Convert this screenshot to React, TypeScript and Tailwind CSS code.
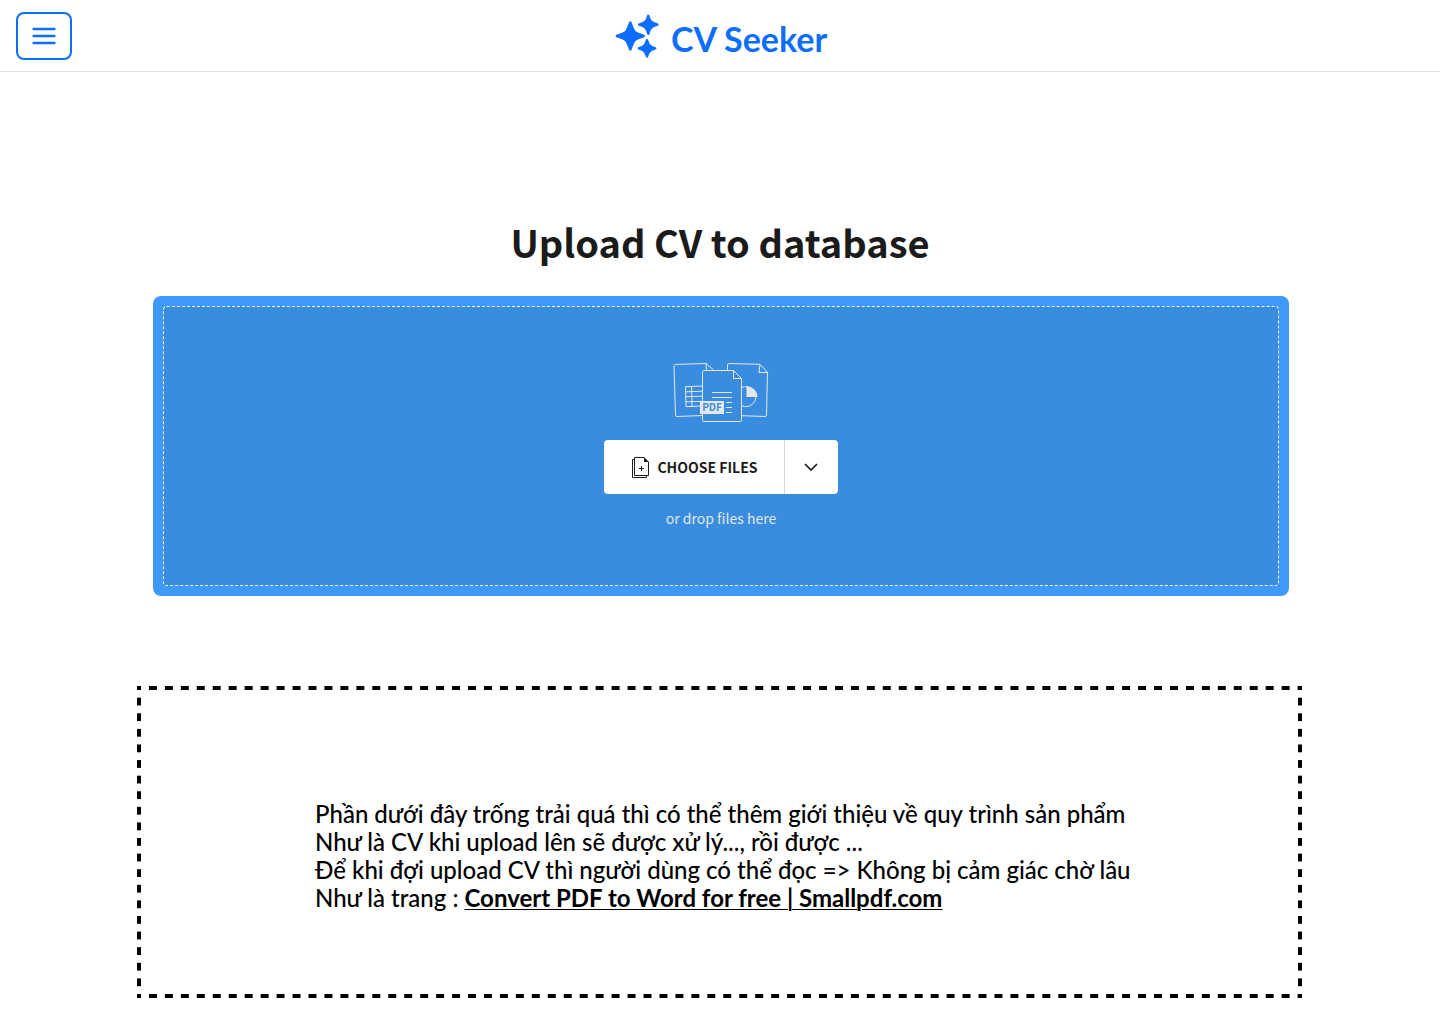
import React from "react";

function Sparkles() {
  return (
    <svg className="h-11 w-11" viewBox="0 0 44 44" fill="#0d6efd" stroke="#0d6efd" strokeWidth="2.4" strokeLinejoin="round" aria-hidden="true">
      <path d="M15.3 8.4C17.3 13.4 18.6 17.6 20.6 18.6C22.6 20 25 20.8 28.8 22C25 23.2 22.6 24 20.6 25.4C18.6 26.4 17.3 30.6 15.3 35.6C13.3 30.6 12 26.4 10 25.4C8 24 5.6 23.2 1.8 22C5.6 20.8 8 20 10 18.6C12 17.6 13.3 13.4 15.3 8.4Z" />
      <path d="M33.3 1.8C34.7 6.8 35.7 8.6 42.5 10.6C35.7 12.4 34.7 14.6 33.3 19.8C31.9 14.6 30.9 12.4 24.1 10.6C30.9 8.6 31.9 6.8 33.3 1.8Z" />
      <path d="M32 26.2C33.4 31 34.3 32.6 40.2 34.4C34.3 36.2 33.4 37.8 32 42.4C30.6 37.8 29.7 36.2 23.8 34.4C29.7 32.6 30.6 31 32 26.2Z" />
    </svg>
  );
}

function Documents() {
  return (
    <svg className="h-[60px] w-[96px]" viewBox="0 0 96 60" fill="none" stroke="#e5e8ea" strokeLinejoin="round" aria-hidden="true">
      <path d="M29.5 53.5L4 54.5Q2.6 54.5 2.5 53L1 4Q1 2.5 2.5 2.4L33 1.5L40.5 8" />
      <path d="M33 1.5L33.5 8" />
      <path d="M29.5 24L12.5 24.7L13 44.7L28 44M12.6 29.8L29.5 29.2M12.7 34.7L29.5 34.2M12.9 39.8L29.5 39.4M18.5 24.5L19 44.4" />
      <path d="M54.5 8V3Q54.5 1.5 56.5 1.5L87 2.3L94.5 10.3L93.5 53Q93.5 54.5 92 54.5L69 53.7" />
      <path d="M87 2.3L86 10.5H94.5" />
      <path d="M69 25.4A10 10 0 1 1 69 43.8" />
      <path d="M73.5 24.5V35H84.5A10.5 10.5 0 0 0 73.5 24.5Z" fill="#e5e8ea" stroke="none" />
      <path d="M60.5 8.5H30.5Q29.5 8.5 29.5 9.5V58.5Q29.5 59.5 30.5 59.5H67.5Q68.5 59.5 68.5 58.5V16.5L60.5 8.5V16.5H68.5" fill="#3a8dde" />
      <path d="M39 30.5H59M39 35.5H59M53 40.5H59M53 45.5H59M53 50.5H59" />
      <path d="M27 39H51V52H27Z" fill="#e5e8ea" stroke="none" />
      <text x="39" y="49" textAnchor="middle" fill="#3a8dde" stroke="none" fontSize="10" fontWeight="700" fontFamily="Noto Sans CJK JP">PDF</text>
    </svg>
  );
}

function FileAdd() {
  return (
    <svg className="h-[21px] w-[17px]" viewBox="0 0 17 21" fill="none" stroke="#1b1b1b" aria-hidden="true">
      <path d="M2.5 2.5H.5V20.5H14.5V18.5" />
      <path d="M12 .5H2.5V18.5H16.5V5" />
      <path d="M12 0L17 5H12Z" fill="#1b1b1b" stroke="none" />
      <path d="M9.5 9V14M7 11.5H12" />
    </svg>
  );
}

const dashes =
  "bg-[linear-gradient(to_right,#000_4px,transparent_4px,transparent_12px,#000_12px),linear-gradient(to_right,#000_4px,transparent_4px,transparent_12px,#000_12px),linear-gradient(to_bottom,#000_4px,transparent_4px,transparent_12px,#000_12px),linear-gradient(to_bottom,#000_4px,transparent_4px,transparent_12px,#000_12px)] [background-position:left_top,left_bottom,left_top,right_top] [background-repeat:round_no-repeat,round_no-repeat,no-repeat_round,no-repeat_round] [background-size:16px_4px,16px_4px,4px_16px,4px_16px]";

export default function App() {
  return (
    <div className="min-h-screen bg-white pb-[26px] text-black">
      <header className="grid h-[72px] grid-cols-[1fr_auto_1fr] items-center border-b border-[#dee2e6] px-4">
        <button type="button" aria-label="Open menu" className="flex h-12 w-14 items-center justify-center rounded-lg border-2 border-[#0d6efd]">
          <svg className="h-6 w-6" viewBox="0 0 24 24" stroke="#0d6efd" strokeWidth="2.3" strokeLinecap="round" aria-hidden="true">
            <path d="M1.5 5H22.5M1.5 12H22.5M1.5 19H22.5" />
          </svg>
        </button>
        <a href="#" className="flex items-center gap-3 pl-0.5 font-['Lato',sans-serif] text-[34px] leading-10 font-bold text-[#0d6efd]">
          <Sparkles />
          <span className="pt-1.5">CV Seeker</span>
        </a>
      </header>

      <main className="font-['Noto_Sans_CJK_JP',sans-serif]">
        <h1 className="mt-[142px] text-center text-[38px] leading-[56px] font-bold text-[#1b1b1b]">Upload CV to database</h1>

        <section aria-label="Upload" className="mt-[26px] mr-[151px] ml-[153px] rounded-lg bg-[#3f99f8] p-[10px]">
          <div className="flex flex-col items-center rounded border border-dashed border-white bg-[#3a8dde] pt-[55px] pb-14">
            <Documents />
            <div className="mt-[18px] flex h-[54px] overflow-hidden rounded bg-white text-[#1b1b1b]">
              <button type="button" className="flex w-[180px] items-center justify-center gap-2 pl-0.5 text-[14px] font-bold whitespace-nowrap">
                <FileAdd />
                CHOOSE FILES
              </button>
              <button type="button" aria-label="More sources" className="flex w-[54px] items-center justify-center border-l border-[#d6d6d6] pr-0.5">
                <svg className="h-4 w-4" viewBox="0 0 16 16" fill="none" stroke="#1b1b1b" strokeWidth="1.7" aria-hidden="true">
                  <path d="M2 5L8 11L14 5" />
                </svg>
              </button>
            </div>
            <p className="mt-[13px] text-[14px] leading-[22px] text-[#e0e5ea]">or drop files here</p>
          </div>
        </section>

        <section className={`mt-[90px] mr-[138px] ml-[137px] pr-[100px] pl-[178px] pt-[114px] pb-[86px] font-['Lato',sans-serif] text-[24px] leading-7 font-medium ${dashes}`}>
          <p>Phần dưới đây trống trải quá thì có thể thêm giới thiệu về quy trình sản phẩm</p>
          <p>Như là CV khi upload lên sẽ được xử lý..., rồi được ...</p>
          <p>Để khi đợi upload CV thì người dùng có thể đọc =&gt; Không bị cảm giác chờ lâu</p>
          <p>
            Như là trang :{" "}
            <a href="https://smallpdf.com" className="font-bold underline decoration-1 underline-offset-2">Convert PDF to Word for free | Smallpdf.com</a>
          </p>
        </section>
      </main>
    </div>
  );
}
